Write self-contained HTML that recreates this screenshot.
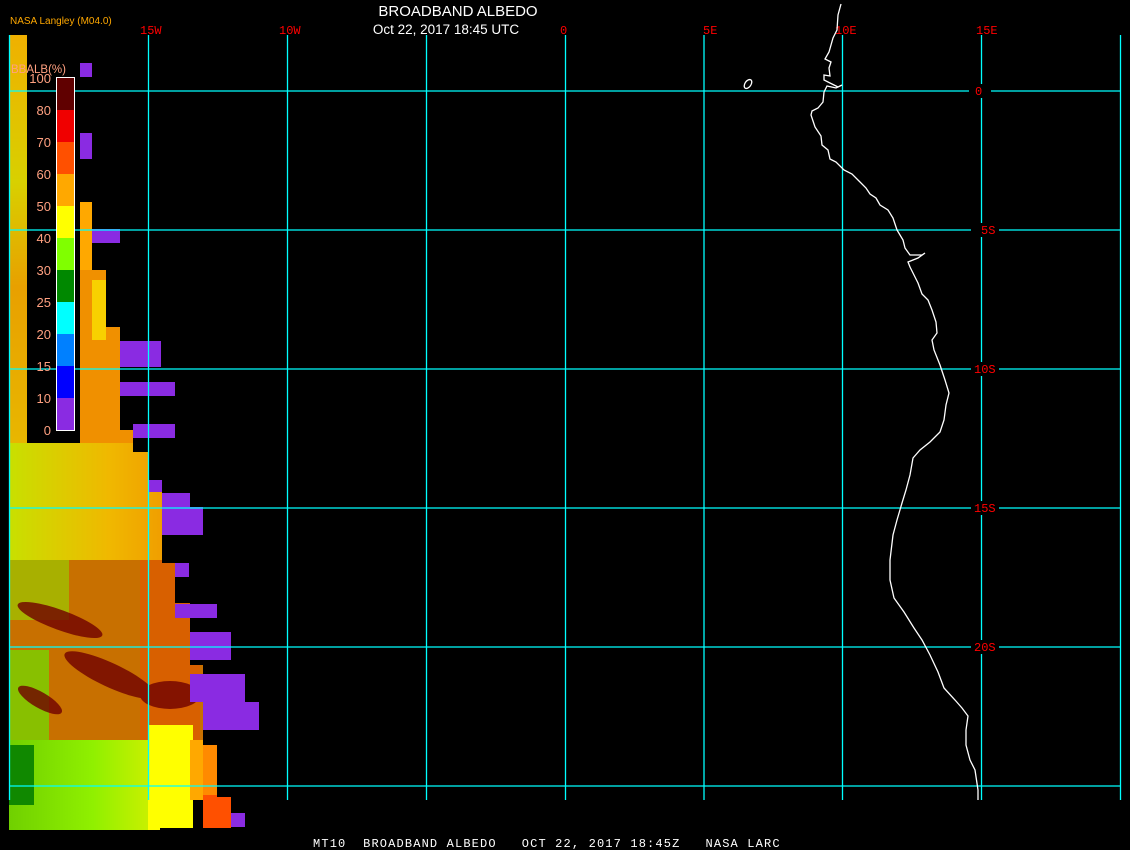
<!DOCTYPE html>
<html><head><meta charset="utf-8"><style>
html,body{margin:0;padding:0;background:#000;width:1130px;height:850px;overflow:hidden}
svg{display:block}
</style></head><body>
<svg width="1130" height="850" viewBox="0 0 1130 850" xmlns="http://www.w3.org/2000/svg">
<defs>
<clipPath id="img">
<polygon points="9,35 27,35 27,443 80,443 80,202 92,202 92,270 106,270 106,327 120,327 120,430 133,430 133,452 148,452 148,480 162,480 162,563 175,563 175,603 190,603 190,665 203,665 203,745 217,745 217,797 231,797 231,828 160,828 160,830 9,830"/>
</clipPath>
<linearGradient id="strip" x1="0" y1="0" x2="0" y2="1">
<stop offset="0" stop-color="#f0b000"/>
<stop offset="0.35" stop-color="#d8d000"/>
<stop offset="0.6" stop-color="#e8a000"/>
<stop offset="1" stop-color="#e8b800"/>
</linearGradient>
<linearGradient id="h1" x1="0" y1="0" x2="1" y2="0">
<stop offset="0" stop-color="#c8e000"/>
<stop offset="0.5" stop-color="#f0b800"/>
<stop offset="1" stop-color="#f08800"/>
</linearGradient>
<linearGradient id="lowg" x1="0" y1="0" x2="1" y2="0">
<stop offset="0" stop-color="#70d000"/>
<stop offset="0.6" stop-color="#90f000"/>
<stop offset="1" stop-color="#c8f000"/>
</linearGradient>
</defs>

<g clip-path="url(#img)">
<rect x="9" y="35" width="20" height="420" fill="url(#strip)"/>
<rect x="80" y="200" width="60" height="260" fill="#f09000"/>
<rect x="80" y="200" width="12" height="70" fill="#ffa800"/>
<rect x="92" y="280" width="14" height="60" fill="#f8d000"/>
<rect x="9" y="443" width="200" height="120" fill="url(#h1)"/>
<rect x="9" y="560" width="230" height="180" fill="#c87000"/>
<rect x="9" y="560" width="60" height="60" fill="#a8b000"/>
<rect x="9" y="650" width="40" height="90" fill="#88c000"/>
<rect x="140" y="560" width="60" height="180" fill="#d86000"/>
<g fill="#700000" opacity="0.8">
<ellipse cx="60" cy="620" rx="45" ry="10" transform="rotate(20 60 620)"/>
<ellipse cx="110" cy="675" rx="50" ry="12" transform="rotate(25 110 675)"/>
<ellipse cx="170" cy="695" rx="30" ry="14"/>
<ellipse cx="40" cy="700" rx="25" ry="8" transform="rotate(30 40 700)"/>
</g>
<rect x="9" y="740" width="140" height="95" fill="url(#lowg)"/>
<rect x="9" y="745" width="25" height="60" fill="#108800"/>
<rect x="148" y="725" width="45" height="105" fill="#ffff00"/>
<rect x="190" y="740" width="27" height="60" fill="#ffa800"/>
<rect x="203" y="745" width="14" height="50" fill="#ff8a00"/>
<rect x="203" y="795" width="28" height="35" fill="#ff5000"/>
</g>

<g fill="#8a2be2">
<rect x="80" y="63" width="12" height="14"/>
<rect x="80" y="133" width="12" height="26"/>
<rect x="92" y="229" width="28" height="14"/>
<rect x="120" y="341" width="41" height="26"/>
<rect x="120" y="382" width="55" height="14"/>
<rect x="133" y="424" width="42" height="14"/>
<rect x="148" y="480" width="14" height="12"/>
<rect x="162" y="493" width="28" height="14"/>
<rect x="162" y="507" width="41" height="28"/>
<rect x="175" y="563" width="14" height="14"/>
<rect x="175" y="604" width="42" height="14"/>
<rect x="190" y="632" width="41" height="28"/>
<rect x="190" y="674" width="55" height="28"/>
<rect x="203" y="702" width="56" height="28"/>
<rect x="231" y="813" width="14" height="14"/>
</g>

<rect x="27" y="35" width="53" height="408" fill="#000"/>

<g stroke="#00ffff" stroke-width="1.3">
<line x1="9.5" y1="35" x2="9.5" y2="800"/>
<line x1="148.5" y1="35" x2="148.5" y2="800"/>
<line x1="287.5" y1="35" x2="287.5" y2="800"/>
<line x1="426.5" y1="35" x2="426.5" y2="800"/>
<line x1="565.5" y1="35" x2="565.5" y2="800"/>
<line x1="704" y1="35" x2="704" y2="800"/>
<line x1="842.5" y1="35" x2="842.5" y2="800"/>
<line x1="981.5" y1="35" x2="981.5" y2="800"/>
<line x1="1120.5" y1="35" x2="1120.5" y2="800"/>
<line x1="9" y1="91" x2="1121" y2="91"/>
<line x1="9" y1="230" x2="1121" y2="230"/>
<line x1="9" y1="369" x2="1121" y2="369"/>
<line x1="9" y1="508" x2="1121" y2="508"/>
<line x1="9" y1="647" x2="1121" y2="647"/>
<line x1="9" y1="786" x2="1121" y2="786"/>
</g>
<g fill="#000">
<rect x="969" y="84" width="22" height="14"/>
<rect x="971" y="223" width="28" height="14"/>
<rect x="971" y="362" width="28" height="14"/>
<rect x="971" y="501" width="28" height="14"/>
<rect x="971" y="640" width="28" height="14"/>
</g>
<g fill="#ff0000" font-family="Liberation Mono, monospace" font-size="12">
<text x="975" y="95">0</text>
<text x="981" y="234">5S</text>
<text x="974" y="373">10S</text>
<text x="974" y="512">15S</text>
<text x="974" y="651">20S</text>
<text x="140" y="34">15W</text>
<text x="279" y="34">10W</text>
<text x="560" y="34">0</text>
<text x="703" y="34">5E</text>
<text x="835" y="34">10E</text>
<text x="976" y="34">15E</text>
</g>

<g fill="none" stroke="#fff" stroke-width="1.3">
<polyline points="841,4 838,15 837,30 833,38 829,52 825,59 831,62 829,68 830,76 824,75 824,80 830,83 838,87 842,85 836,88 827,86 824,92 823,102 818,108 812,111 811,115 815,127 821,136 822,145 828,150 830,159 836,162 844,170 852,174 860,182 866,188 870,194 876,198 880,205 888,210 893,218 897,230 903,240 905,248 910,255 922,255 925,253 918,258 908,262 910,267 915,277 918,283 922,294 928,300 932,310 936,322 937,333 932,340 934,350 940,365 945,380 949,393 946,405 944,420 940,432 930,442 920,450 913,458 910,475 906,490 902,503 897,520 893,535 890,560 890,580 894,598 904,612 914,628 922,640 930,655 938,672 944,688 955,700 962,708 968,716 966,730 966,745 970,760 975,770 978,790 978,800"/>
<ellipse cx="748" cy="84" rx="3" ry="5" transform="rotate(35 748 84)"/>
</g>

<g>
<rect x="56" y="77" width="18" height="33" fill="#600000"/>
<rect x="56" y="110" width="18" height="32" fill="#f00000"/>
<rect x="56" y="142" width="18" height="32" fill="#ff5000"/>
<rect x="56" y="174" width="18" height="32" fill="#ffa800"/>
<rect x="56" y="206" width="18" height="32" fill="#ffff00"/>
<rect x="56" y="238" width="18" height="32" fill="#80ff00"/>
<rect x="56" y="270" width="18" height="32" fill="#008800"/>
<rect x="56" y="302" width="18" height="32" fill="#00ffff"/>
<rect x="56" y="334" width="18" height="32" fill="#0080ff"/>
<rect x="56" y="366" width="18" height="32" fill="#0000ff"/>
<rect x="56" y="398" width="18" height="32" fill="#8a2be2"/>
<rect x="56.5" y="77.5" width="18" height="353" fill="none" stroke="#fff" stroke-width="1"/>
</g>
<g fill="#ffa080" font-family="Liberation Sans, sans-serif" font-size="13" text-anchor="end">
<text x="51" y="83">100</text>
<text x="51" y="115">80</text>
<text x="51" y="147">70</text>
<text x="51" y="179">60</text>
<text x="51" y="211">50</text>
<text x="51" y="243">40</text>
<text x="51" y="275">30</text>
<text x="51" y="307">25</text>
<text x="51" y="339">20</text>
<text x="51" y="371">15</text>
<text x="51" y="403">10</text>
<text x="51" y="435">0</text>
</g>
<text x="11" y="73" fill="#ffa080" font-family="Liberation Sans, sans-serif" font-size="11.5">BBALB(%)</text>

<text x="10" y="24" fill="#ffa800" font-family="Liberation Sans, sans-serif" font-size="10">NASA Langley (M04.0)</text>
<text x="458" y="16" fill="#fff" font-family="Liberation Sans, sans-serif" font-size="15" text-anchor="middle">BROADBAND ALBEDO</text>
<text x="446" y="34" fill="#fff" font-family="Liberation Sans, sans-serif" font-size="13.5" text-anchor="middle">Oct 22, 2017 18:45 UTC</text>
<text x="313" y="847" fill="#fff" font-family="Liberation Mono, monospace" font-size="12" letter-spacing="1.15" xml:space="preserve">MT10  BROADBAND ALBEDO   OCT 22, 2017 18:45Z   NASA LARC</text>
</svg>
</body></html>
